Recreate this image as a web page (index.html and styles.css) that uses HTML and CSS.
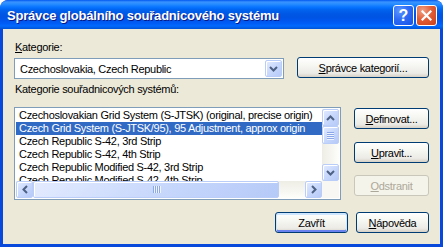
FILE: index.html
```html
<!DOCTYPE html>
<html>
  <head>
    <title>Správce globálního souřadnicového systému</title>
    <link rel="stylesheet" href="styles.css">
  </head>
  <body>
    <div class="window">
      <div class="titlebar">
        <span class="title">Správce globálního souřadnicového systému</span>
        <div class="caption-buttons">
          <div class="cap-btn help">?</div>
          <div class="cap-btn close">
            <svg width="11" height="11" viewBox="0 0 11 11">
              <path d="M1.5 1.5 L9.5 9.5 M9.5 1.5 L1.5 9.5" stroke="#fff" stroke-width="2.2" stroke-linecap="square"/>
            </svg>
          </div>
        </div>
      </div>

      <div class="client">
        <div class="label"><u>K</u>ategorie:</div>

        <div class="combo-row">
          <div class="combo">
            <span class="combo-text">Czechoslovakia, Czech Republic</span>
            <div class="sb-btn combo-arrow">
              <svg width="9" height="6" viewBox="0 0 9 6"><path d="M1 1 L4.5 4.5 L8 1" class="chev"/></svg>
            </div>
          </div>
          <button class="btn btn-wide"><u>S</u>právce kategorií...</button>
        </div>

        <div class="label label-list">Kategorie souřadnicových systémů:</div>

        <div class="list-row">
          <div class="listbox">
            <div class="items">
              <div class="item">Czechoslovakian Grid System (S-JTSK) (original, precise origin)</div>
              <div class="item selected">Czech Grid System (S-JTSK/95), 95 Adjustment, approx origin</div>
              <div class="item">Czech Republic S-42, 3rd Strip</div>
              <div class="item">Czech Republic S-42, 4th Strip</div>
              <div class="item">Czech Republic Modified S-42, 3rd Strip</div>
              <div class="item">Czech Republic Modified S-42, 4th Strip</div>
            </div>
            <div class="vscroll">
              <div class="sb-btn">
                <svg width="9" height="6" viewBox="0 0 9 6"><path d="M1 5 L4.5 1.5 L8 5" class="chev"/></svg>
              </div>
              <div class="sb-btn thumb-v">
                <span class="grip-h"></span><span class="grip-h"></span><span class="grip-h"></span><span class="grip-h"></span>
              </div>
              <div class="track"></div>
              <div class="sb-btn">
                <svg width="9" height="6" viewBox="0 0 9 6"><path d="M1 1 L4.5 4.5 L8 1" class="chev"/></svg>
              </div>
            </div>
            <div class="hscroll">
              <div class="sb-btn">
                <svg width="6" height="9" viewBox="0 0 6 9"><path d="M5 1 L1.5 4.5 L5 8" class="chev"/></svg>
              </div>
              <div class="sb-btn thumb-h">
                <span class="grip-v"></span><span class="grip-v"></span><span class="grip-v"></span><span class="grip-v"></span>
              </div>
              <div class="track"></div>
              <div class="sb-btn">
                <svg width="6" height="9" viewBox="0 0 6 9"><path d="M1 1 L4.5 4.5 L1 8" class="chev"/></svg>
              </div>
            </div>
            <div class="corner"></div>
          </div>

          <div class="side-buttons">
            <button class="btn"><u>D</u>efinovat...</button>
            <button class="btn"><u>U</u>pravit...</button>
            <button class="btn disabled"><u>O</u>dstranit</button>
          </div>
        </div>

        <div class="bottom-buttons">
          <button class="btn btn-default">Zavřít</button>
          <button class="btn"><u>N</u>ápověda</button>
        </div>
      </div>
    </div>
  </body>
</html>
```

FILE: styles.css
```css
body{
  margin:0;
  background:#fff;
  font-family:"Liberation Sans", Arial, sans-serif;
  font-size:11px;
  letter-spacing:-0.3px;
}
.window{
  width:443px;
  height:247px;
  box-sizing:border-box;
  border-radius:8px 8px 0 0;
  background:#0848DA;
  display:flex;
  flex-direction:column;
  overflow:hidden;
}
.titlebar{
  height:29px;
  flex:none;
  display:flex;
  align-items:center;
  justify-content:space-between;
  padding:0 6px 0 7px;
  border-radius:8px 8px 0 0;
  background:linear-gradient(to bottom,
    #0058EE 0, #3A93FF 2px, #288EFF 4px, #127DFF 6px, #036FFC 8px,
    #0262EE 10px, #0057E5 14px, #0054E3 17px, #0055EB 20px,
    #005BF5 23px, #026AFE 26px, #0062EF 27px, #0052D6 29px);
}
.title{
  color:#fff;
  font-family:"Liberation Sans", Arial, sans-serif;
  font-weight:bold;
  font-size:13px;
  letter-spacing:-0.2px;
  text-shadow:1px 1px #0A1883;
  padding-top:2px;
}
.caption-buttons{
  display:flex;
  gap:2px;
  padding-top:2px;
}
.cap-btn{
  width:21px;
  height:21px;
  box-sizing:border-box;
  border:1px solid #fff;
  border-radius:3px;
  display:flex;
  align-items:center;
  justify-content:center;
  color:#fff;
}
.help{
  background:radial-gradient(circle at 30% 25%, #5E97FF 0, #2E6CF5 45%, #1552E8 100%);
  font-weight:bold;
  font-size:16px;
  letter-spacing:0;
}
.close{
  background:radial-gradient(circle at 30% 25%, #F0A286 0, #E25E37 45%, #C83F17 100%);
}

.client{
  flex:1;
  margin:0 3px 3px;
  background:#ECE9D8;
  padding:12px 11px 0 11px;
  display:flex;
  flex-direction:column;
}
.label{
  line-height:13px;
  height:13px;
  padding-left:1px;
}
.label-list{
  margin-top:5px;
}

.combo-row{
  display:flex;
  justify-content:space-between;
  align-items:flex-start;
  margin-top:3px;
  height:21px;
}
.combo{
  margin-top:1px;
  width:270px;
  height:21px;
  box-sizing:border-box;
  border:1px solid #7F9DB9;
  background:#fff;
  display:flex;
  align-items:center;
  justify-content:space-between;
  padding:1px;
}
.combo-text{
  padding-left:4px;
}
.combo-arrow{
  width:16px;
  height:17px;
}

.btn{
  height:21px;
  width:75px;
  box-sizing:border-box;
  border:1px solid #003C74;
  border-radius:3px;
  background:linear-gradient(to bottom, #FFFFFF 0%, #F6F6F2 40%, #ECEBE6 80%, #D6D0C5 100%);
  font-family:"Liberation Sans", Arial, sans-serif;
  font-size:11px;
  letter-spacing:-0.3px;
  color:#000;
  padding:0;
}
.btn-wide{
  width:132px;
}
.btn-default{
  box-shadow:inset 0 1px 0 1px #CEE7FF, inset 0 -1px 0 1px #6982EE;
}
.btn.disabled{
  border-color:#C9C7BA;
  background:#F5F4EA;
  color:#ACA899;
}

.list-row{
  display:flex;
  justify-content:space-between;
  margin-top:11px;
  height:93px;
}
.listbox{
  width:327px;
  box-sizing:border-box;
  border:1px solid #7F9DB9;
  background:#fff;
  padding:1px;
  display:grid;
  grid-template-columns:1fr 17px;
  grid-template-rows:1fr 17px;
  overflow:hidden;
}
.items{
  overflow:hidden;
  white-space:nowrap;
}
.item{
  height:13px;
  line-height:13px;
  padding-left:3px;
}
.item.selected{
  background:#316AC5;
  color:#fff;
}
.vscroll{
  display:flex;
  flex-direction:column;
  background:linear-gradient(to right, #EEEDE5, #FDFDFA);
}
.hscroll{
  display:flex;
  background:linear-gradient(to bottom, #EEEDE5, #FDFDFA);
}
.track{
  flex:1;
}
.corner{
  background:#F8F7F3;
}
.sb-btn{
  width:17px;
  height:17px;
  flex:none;
  box-sizing:border-box;
  border:1px solid #B9CDF8;
  border-radius:2px;
  box-shadow:inset 1px 1px 0 #fff;
  background:linear-gradient(135deg, #E3EBFE 0%, #C8D8FC 50%, #B6CAF8 100%);
  display:flex;
  align-items:center;
  justify-content:center;
}
.chev{
  fill:none;
  stroke:#4D6185;
  stroke-width:2;
}
.thumb-v{
  height:18px;
  flex-direction:column;
  gap:1px;
}
.thumb-h{
  width:246px;
  gap:1px;
}
.grip-h{
  width:7px;
  height:1px;
  background:#8CA8EA;
  box-shadow:0 1px 0 #EEF4FE;
}
.grip-v{
  width:1px;
  height:7px;
  background:#8CA8EA;
  box-shadow:1px 0 0 #EEF4FE;
}

.side-buttons{
  display:flex;
  flex-direction:column;
  padding-top:1px;
}
.side-buttons .btn + .btn{
  margin-top:13px;
}
.side-buttons .btn.disabled{
  margin-top:12px;
}

.bottom-buttons{
  display:flex;
  justify-content:flex-end;
  gap:8px;
  margin-top:12px;
}
.bottom-buttons .btn{
  width:73px;
}
```
